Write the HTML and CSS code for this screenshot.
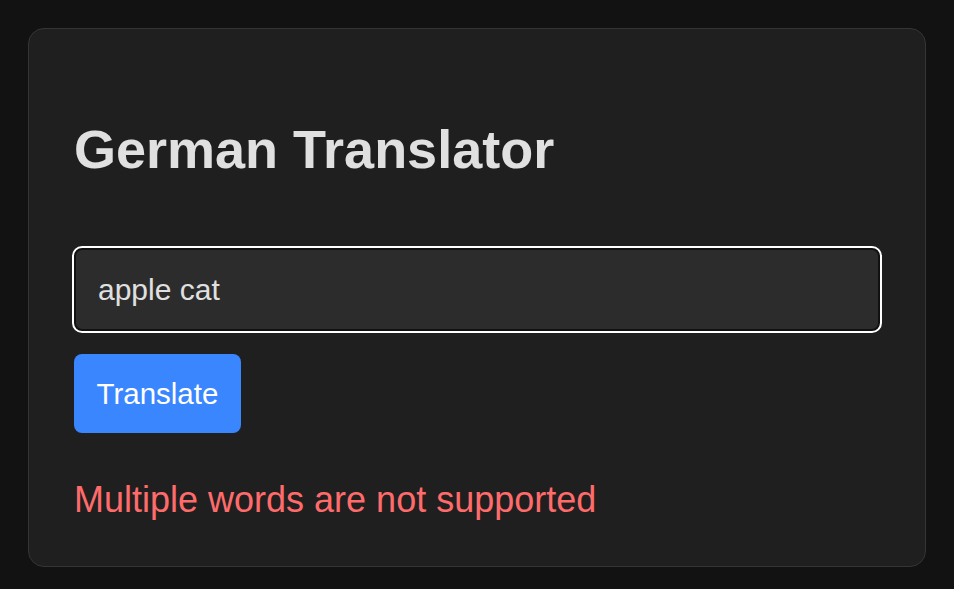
FILE: index.html
```html
<!DOCTYPE html>
<html lang="en">
<head>
<meta charset="utf-8">
<title>German Translator</title>
<link rel="stylesheet" href="styles.css">
</head>
<body>
<main class="card">
  <h1 class="title">German Translator</h1>
  <input class="word-input" type="text" value="apple cat">
  <div class="actions">
    <button class="translate-btn" type="button">Translate</button>
  </div>
  <p class="error">Multiple words are not supported</p>
</main>
</body>
</html>
```
FILE: styles.css
```css
* { box-sizing: border-box; }

html, body {
  background: #121212;
}

body {
  margin: 0;
  padding: 28px;
  font-family: "Liberation Sans", Arial, sans-serif;
  color: #e0e0e0;
}

.card {
  display: flex;
  flex-direction: column;
  background: #1f1f1f;
  border: 1px solid #353535;
  border-radius: 16px;
  padding: 45px;
}

.title {
  margin: 44px 0 68px;
  font-size: 54px;
  font-weight: bold;
  line-height: normal;
  color: #e0e0e0;
}

.word-input {
  width: 100%;
  height: 83px;
  font-family: inherit;
  font-size: 30px;
  line-height: normal;
  color: #e0e0e0;
  background: #2c2c2c;
  border: 2px solid #111111;
  border-radius: 8px;
  padding: 0 22px;
  outline: 2px solid #ffffff;
  outline-offset: 0;
}

.actions {
  display: flex;
  margin-top: 23px;
}

.translate-btn {
  height: 79px;
  font-family: inherit;
  font-size: 29.5px;
  line-height: normal;
  color: #ffffff;
  background: #3a86ff;
  border: none;
  border-radius: 8px;
  padding: 0 22.5px;
}

.error {
  margin: 46px 0 0;
  font-size: 36px;
  line-height: normal;
  color: #ff6b6b;
}
```
